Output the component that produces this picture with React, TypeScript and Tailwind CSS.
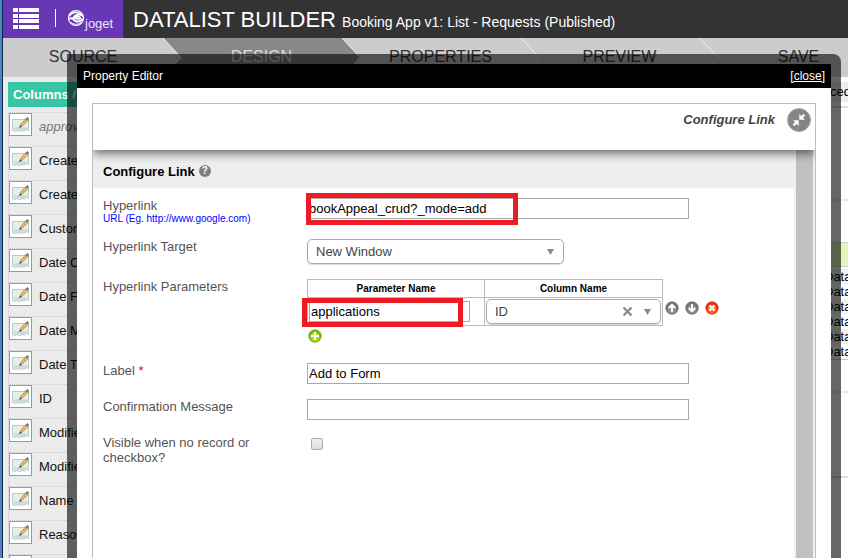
import type { ReactNode } from "react";

const columns = [
  "approv",
  "Create",
  "Create",
  "Custom",
  "Date C",
  "Date F",
  "Date M",
  "Date T",
  "ID",
  "Modifie",
  "Modifie",
  "Name",
  "Reaso",
  "",
];

const steps = ["DESIGN", "PROPERTIES", "PREVIEW", "SAVE"];

function ListIcon() {
  return (
    <svg width="26" height="21" viewBox="0 0 26 21" fill="#fff" aria-hidden="true">
      {[0, 6, 11, 17].map((y) => (
        <g key={y}>
          <rect x="0" y={y} width="5" height="4" />
          <rect x="6" y={y} width="20" height="4" />
        </g>
      ))}
    </svg>
  );
}

function JogetLogo() {
  return (
    <svg width="18" height="18" viewBox="0 0 18 18" fill="none" stroke="#fff" aria-hidden="true">
      <circle cx="9" cy="9" r="7.500" strokeWidth="1.200" />
      <path d="M2.500 7C5 2.500 12 2 15 6.500C11.500 5 8 5.800 6.500 8.500C10 7 13 7.500 13.500 9.500C12 11 9 9.500 6.500 8.500" strokeWidth="1.700" />
      <path d="M2 10C4.500 8.500 6.500 10 7.500 11.500C9.500 13.200 13.500 12.800 16 10" strokeWidth="1.900" />
      <path d="M4 13.500C7 15.800 11 16 14 13.500" strokeWidth="1" />
    </svg>
  );
}

function EditIcon() {
  return (
    <svg width="19" height="19" viewBox="0 0 19 19" aria-hidden="true">
      <path d="M1.500 4.500H17.500V15.500L15.500 14.500L13.500 16L11 15.500L8.500 16.500L6 15.500L4 16.500L1.500 15.500Z" fill="#e6eeee" stroke="#b4c7c9" />
      <path d="M3 13.500H16" stroke="#c4d5d4" strokeWidth="2" />
      <path d="M8.500 12.500L9.500 9.500L15 3.500L17 5.500L11 11.500Z" fill="#e9bd55" stroke="#8a6b30" strokeWidth=".6" />
      <path d="M14.500 4L16.500 2L18 3.500L16.500 5.500Z" fill="#777" />
      <path d="M8.500 12.500L9.200 10.500L10.500 11.800Z" fill="#333" />
    </svg>
  );
}

function Caret({ className = "" }: { className?: string }) {
  return (
    <svg className={"pointer-events-none absolute " + className} width="7" height="6" viewBox="0 0 7 6" aria-hidden="true">
      <path d="M0 0H7L3.500 6Z" fill="#888" />
    </svg>
  );
}

function RoundIcon({ kind }: { kind: "up" | "down" | "delete" | "add" }) {
  const fills = { up: "#757575", down: "#757575", delete: "#ee2c08", add: "#7cb800" };
  const light = { up: "#8f8f8f", down: "#8f8f8f", delete: "#ff6418", add: "#a8de20" };
  return (
    <svg width="14" height="14" viewBox="0 0 14 14" aria-hidden="true">
      <circle cx="7" cy="7" r="6.500" fill={fills[kind]} stroke="#0002" />
      <circle cx="7" cy="8" r="4.500" fill={light[kind]} />
      <g stroke="#fff" strokeWidth="2" fill="none">
        {kind === "up" && <path d="M7 11V4.500M3.800 7L7 3.800L10.200 7" />}
        {kind === "down" && <path d="M7 3V9.500M3.800 7L7 10.200L10.200 7" />}
        {kind === "delete" && <path d="M4.500 4.500L9.500 9.500M9.500 4.500L4.500 9.500" strokeWidth="2.400" />}
        {kind === "add" && <path d="M7 3V11M3 7H11" strokeWidth="2.200" />}
      </g>
    </svg>
  );
}

function Highlight({ className }: { className: string }) {
  return <div className={"pointer-events-none absolute border-5 border-[#ed1c24] " + className} />;
}

function Row({ label, id, note, children }: { label: ReactNode; id: string; note?: ReactNode; children: ReactNode }) {
  return (
    <div className="grid grid-cols-[204px_1fr]">
      <div className="w-[170px]">
        <label htmlFor={id} className="block text-[#555]">{label}</label>
        {note}
      </div>
      <div className="relative flex flex-col items-start">{children}</div>
    </div>
  );
}

const textBox = "block h-[21px] border border-[#a9a9a9] bg-white px-px text-black outline-none";
const dropDown =
  "block h-[25px] w-full appearance-none rounded-[5px] border border-[#aaa] bg-white px-2 text-[#444] shadow-[0_1px_1px_rgba(0,0,0,0.15)] outline-none";

function StepArrow({ active }: { active: boolean }) {
  return (
    <svg className="absolute top-0 left-0" width="19" height="39" viewBox="0 0 19 39" aria-hidden="true">
      <path d="M0 0L18 19.500L0 39Z" fill={active ? "#888" : "#ccc"} />
      <path d="M0 0L18 19.500L0 39" fill="none" stroke="#eee" />
    </svg>
  );
}

function PropertyEditor() {
  return (
    <section
      aria-label="Property Editor"
      className="absolute top-[54px] right-[7px] bottom-0 left-[67px] flex flex-col rounded-tr-lg border-10 border-b-0 border-black/60 bg-white bg-clip-padding"
    >
      <header className="flex h-6 shrink-0 items-center justify-between bg-black px-[6px] text-[12px] text-white">
        <h2>Property Editor</h2>
        <a href="#close" className="underline">[close]</a>
      </header>
      <div className="mx-[15px] mt-[15px] flex min-h-0 flex-1 flex-col overflow-hidden border border-b-0 border-[#bbb]">
        <div className="relative flex h-[46px] shrink-0 items-center justify-end gap-3 bg-white pr-1 pb-[14px] shadow-[0_3px_10px_rgba(0,0,0,0.6)]">
          <span className="text-[13px] font-bold text-[#444] italic">Configure Link</span>
          <button aria-label="Collapse" className="flex size-6 items-center justify-center rounded-full border border-[#aaa] bg-[#858585]">
            <svg width="14" height="14" viewBox="0 0 14 14" aria-hidden="true">
              <path d="M7.500 1.500V6.500H12.500L10.800 4.800L13 2.500L11.500 1L9.200 3.200Z M6.500 12.500V7.500H1.500L3.200 9.200L1 11.500L2.500 13L4.800 10.800Z" fill="#fff" stroke="#fff" strokeWidth=".4" />
            </svg>
          </button>
        </div>
        <div className="flex min-h-0 flex-1">
          <form className="min-w-0 flex-1 text-[13px] leading-[15px]">
            <div className="flex h-[38px] items-center gap-1 bg-[#eee] px-[10px] pt-1">
              <h3 className="font-bold text-black">Configure Link</h3>
              <span className="flex size-3 items-center justify-center rounded-full bg-[#808080] text-[10px] leading-3 font-bold text-white">?</span>
            </div>
            <div className="flex flex-col gap-[15px] px-[10px] pt-[10px]">
              <Row
                label="Hyperlink"
                id="hyperlink"
                note={<p className="text-[10px] leading-[11px] text-[#00f]">URL (Eg. http://www.google.com)</p>}
              >
                <input id="hyperlink" defaultValue="bookAppeal_crud?_mode=add" className={textBox + " w-[382px]"} />
                <Highlight className="-top-[5px] -left-px h-8 w-[212px]" />
              </Row>
              <Row label="Hyperlink Target" id="target">
                <div className="relative w-[257px]">
                  <select id="target" className={dropDown}>
                    <option>New Window</option>
                  </select>
                  <Caret className="top-[10px] right-[10px]" />
                </div>
              </Row>
              <Row label="Hyperlink Parameters" id="parameter">
                <div className="flex items-start gap-[2px]">
                  <table className="border-collapse text-left">
                    <thead>
                      <tr className="h-[18px] text-center text-[10px] leading-3 text-black">
                        <th className="w-[177px] border border-[#bbb]">Parameter Name</th>
                        <th className="w-[178px] border border-[#bbb]">Column Name</th>
                      </tr>
                    </thead>
                    <tbody>
                      <tr className="h-7">
                        <td className="border border-[#bbb] px-px">
                          <input id="parameter" defaultValue="applications" className={textBox + " w-[161px]"} />
                        </td>
                        <td className="border border-[#bbb] p-px">
                          <div className="relative w-[175px]">
                            <select aria-label="Column Name" className={dropDown}>
                              <option>ID</option>
                            </select>
                            <button type="button" aria-label="Clear" className="absolute top-[7px] right-7">
                              <svg width="11" height="11" viewBox="0 0 11 11" aria-hidden="true">
                                <path d="M1.500 1.500L9.500 9.500M9.500 1.500L1.500 9.500" stroke="#888" strokeWidth="2.200" />
                              </svg>
                            </button>
                            <Caret className="top-[10px] right-[10px]" />
                          </div>
                        </td>
                      </tr>
                    </tbody>
                  </table>
                  <div className="mt-[22px] flex gap-[6px]">
                    <button type="button" aria-label="Move up"><RoundIcon kind="up" /></button>
                    <button type="button" aria-label="Move down"><RoundIcon kind="down" /></button>
                    <button type="button" aria-label="Delete"><RoundIcon kind="delete" /></button>
                  </div>
                </div>
                <button type="button" aria-label="Add parameter" className="mt-[3px] mb-[5px] ml-px"><RoundIcon kind="add" /></button>
                <Highlight className="top-[19px] -left-[5px] h-[29px] w-[161px]" />
              </Row>
              <Row label={<>Label <span className="text-[#f00]">*</span></>} id="label">
                <input id="label" defaultValue="Add to Form" className={textBox + " w-[382px]"} />
              </Row>
              <Row label="Confirmation Message" id="confirmation">
                <input id="confirmation" className={textBox + " w-[382px]"} />
              </Row>
              <Row label="Visible when no record or checkbox?" id="visible">
                <input
                  id="visible"
                  type="checkbox"
                  className="mt-[3px] ml-1 size-3 appearance-none rounded-[2px] border border-[#aaa] bg-linear-to-b from-[#eee] to-[#ddd]"
                />
              </Row>
            </div>
          </form>
          <div className="w-[21px] border-x-2 border-[#f1f1f1] bg-[#c1c1c1]" />
        </div>
      </div>
    </section>
  );
}

export default function App() {
  return (
    <div className="relative flex h-screen overflow-hidden bg-white font-['Liberation_Sans',Arial,sans-serif] text-[13px]">
      <div className="w-[3px] shrink-0 border-r border-[#082a50] bg-[#5584bd]" />
      <div className="flex min-w-0 flex-1 flex-col">
        <header className="flex h-[38px] shrink-0 items-center bg-[#333] text-white">
          <div className="flex h-full w-[120px] items-center bg-[#6737b5] pb-[2px] pl-[10px]">
            <ListIcon />
            <span className="ml-4 h-[18px] w-px bg-white" />
            <span className="ml-[11px]"><JogetLogo /></span>
            <span className="pt-3 text-[13px] text-[#ede5f7]">joget</span>
          </div>
          <h1 className="ml-[10px] text-[22px] whitespace-nowrap">
            DATALIST BUILDER <small className="text-[14px]">Booking App v1: List - Requests (Published)</small>
          </h1>
        </header>
        <nav className="flex h-[39px] shrink-0 overflow-hidden bg-[#ccc] text-[16px] text-[#333]">
          <a href="#source" className="flex w-40 shrink-0 items-center justify-center pb-px">SOURCE</a>
          {steps.map((step, i) => (
            <a
              key={step}
              href={"#" + step.toLowerCase()}
              className={"relative flex w-[179px] shrink-0 items-center justify-center pb-px pl-[18px] " + (i === 0 ? "bg-[#888] text-[#ddd]" : "")}
            >
              <StepArrow active={i === 1} />
              {step}
            </a>
          ))}
        </nav>
        <div className="flex min-h-0 flex-1 justify-between">
          <aside className="w-[90px] shrink-0 overflow-hidden bg-[#ebebeb] pt-[5px] pl-[5px]">
            <h2 className="mb-[5px] flex h-[25px] items-center bg-[#38c5a5] pl-[5px] font-bold whitespace-nowrap text-white">Columns /</h2>
            <ul>
              {columns.map((name, i) => (
                <li
                  key={i}
                  className={"flex h-[34px] items-start gap-[7px] border-t border-l border-dotted border-[#ccc] " + (i === 0 ? "text-[#777] italic" : "text-[#111]")}
                >
                  <span className="flex size-[23px] shrink-0 items-center justify-center border border-[#999] bg-white"><EditIcon /></span>
                  <span className="pt-[6px] leading-[15px] whitespace-nowrap">{name}</span>
                </li>
              ))}
            </ul>
          </aside>
          <main className="w-6 shrink-0 whitespace-nowrap text-black">
            <div className="mt-[5px] h-5 bg-[#eee] pl-[6px] leading-5">ced</div>
            <div className="mt-1 h-[95px] border-t-2 border-b-2 border-[#ddd] [border-bottom-style:dotted]" />
            <div className="mt-[41px] h-[25px] border-y border-[#ccc] bg-[#e2f5ba]" />
            <ul className="border-b border-[#ccc] pt-[2px] leading-[15px]">
              {[0, 1, 2, 3, 4, 5].map((i) => (
                <li key={i} className="odd:bg-[#f3f3f3] even:bg-white">Data</li>
              ))}
            </ul>
            <div className="mt-[31px] border-t-2 border-dotted border-[#ddd]" />
            <div className="mt-[83px] border-t-2 border-[#ddd]" />
          </main>
        </div>
      </div>
      <PropertyEditor />
    </div>
  );
}
